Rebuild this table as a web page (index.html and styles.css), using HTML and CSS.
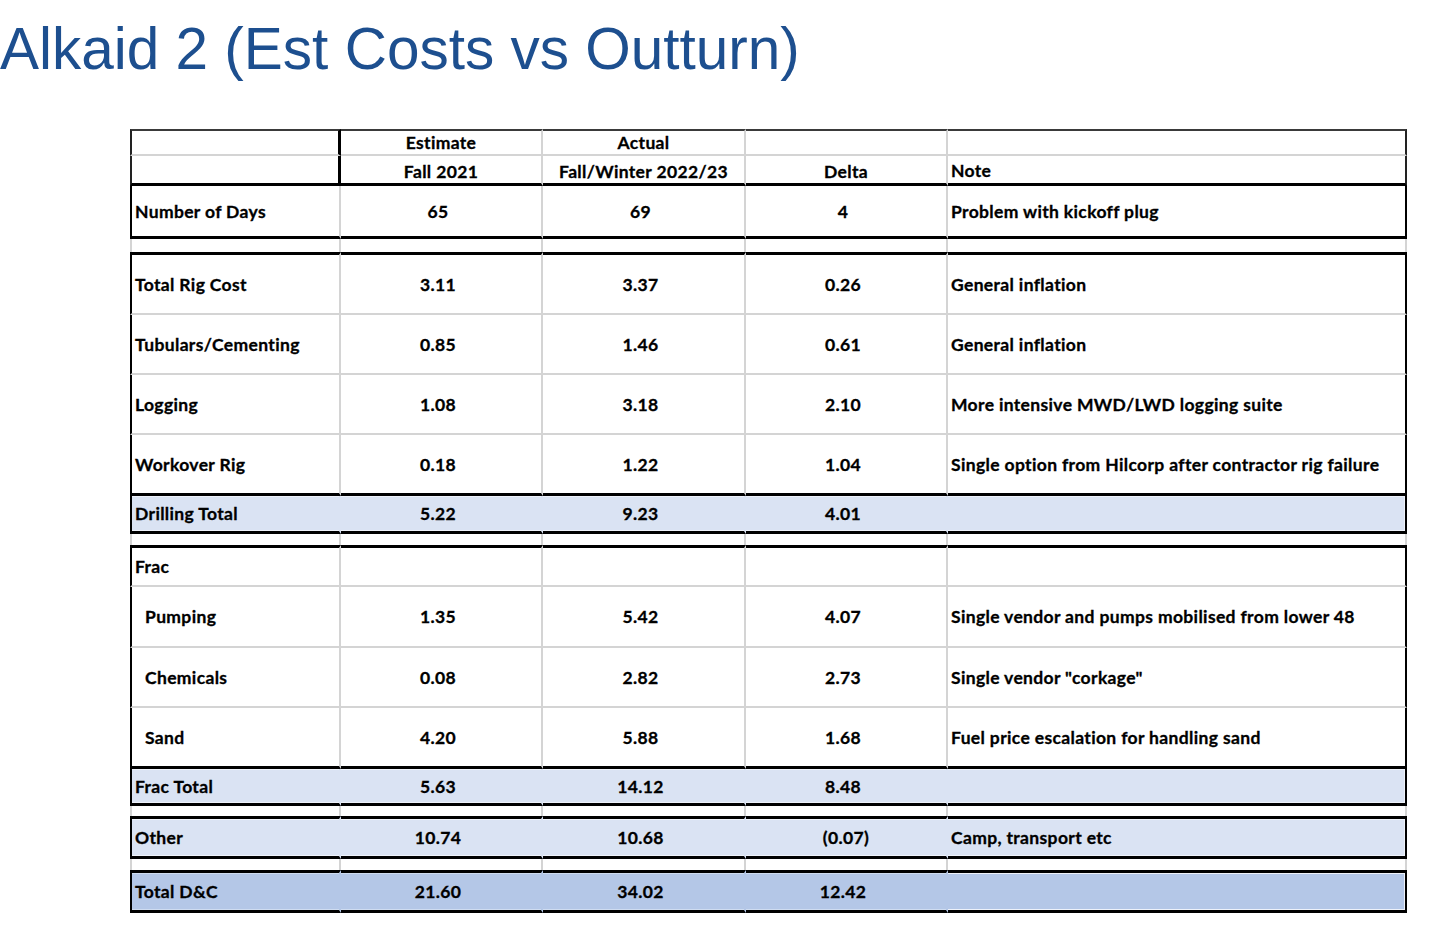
FILE: index.html
```html
<!DOCTYPE html>
<html lang="en">
<head>
<meta charset="utf-8">
<title>Alkaid 2 (Est Costs vs Outturn)</title>
<link rel="stylesheet" href="styles.css">
</head>
<body>
<h1 class="title">Alkaid 2 (Est Costs vs Outturn)</h1>
<div class="sheet">
  <div class="row head1">
    <div class="c lab"></div><div class="c hd">Estimate</div><div class="c hd">Actual</div><div class="c hd"></div><div class="c note"></div>
  </div>
  <div class="row head2">
    <div class="c lab"></div><div class="c hd">Fall 2021</div><div class="c hd">Fall/Winter 2022/23</div><div class="c hd">Delta</div><div class="c note">Note</div>
  </div>
  <div class="row blk bb h53">
    <div class="c lab">Number of Days</div><div class="c num">65</div><div class="c num">69</div><div class="c num">4</div><div class="c note">Problem with kickoff plug</div>
  </div>
  <div class="row gap h13">
    <div class="c"></div><div class="c"></div><div class="c"></div><div class="c"></div><div class="c"></div>
  </div>
  <div class="row blk bt bg h63">
    <div class="c lab">Total Rig Cost</div><div class="c num">3.11</div><div class="c num">3.37</div><div class="c num">0.26</div><div class="c note">General inflation</div>
  </div>
  <div class="row blk bg h60">
    <div class="c lab">Tubulars/Cementing</div><div class="c num">0.85</div><div class="c num">1.46</div><div class="c num">0.61</div><div class="c note">General inflation</div>
  </div>
  <div class="row blk bg h60">
    <div class="c lab">Logging</div><div class="c num">1.08</div><div class="c num">3.18</div><div class="c num">2.10</div><div class="c note">More intensive MWD/LWD logging suite</div>
  </div>
  <div class="row blk bb h61">
    <div class="c lab">Workover Rig</div><div class="c num">0.18</div><div class="c num">1.22</div><div class="c num">1.04</div><div class="c note">Single option from Hilcorp after contractor rig failure</div>
  </div>
  <div class="row blk fill bb h38">
    <div class="c lab">Drilling Total</div><div class="c num">5.22</div><div class="c num">9.23</div><div class="c num">4.01</div><div class="c note"></div>
  </div>
  <div class="row gap h11">
    <div class="c"></div><div class="c"></div><div class="c"></div><div class="c"></div><div class="c"></div>
  </div>
  <div class="row blk bt bg h42">
    <div class="c lab">Frac</div><div class="c num"></div><div class="c num"></div><div class="c num"></div><div class="c note"></div>
  </div>
  <div class="row blk bg h61">
    <div class="c lab sub">Pumping</div><div class="c num">1.35</div><div class="c num">5.42</div><div class="c num">4.07</div><div class="c note">Single vendor and pumps mobilised from lower 48</div>
  </div>
  <div class="row blk bg h60">
    <div class="c lab sub">Chemicals</div><div class="c num">0.08</div><div class="c num">2.82</div><div class="c num">2.73</div><div class="c note">Single vendor "corkage"</div>
  </div>
  <div class="row blk bb h61">
    <div class="c lab sub">Sand</div><div class="c num">4.20</div><div class="c num">5.88</div><div class="c num">1.68</div><div class="c note">Fuel price escalation for handling sand</div>
  </div>
  <div class="row blk fill bb h37">
    <div class="c lab">Frac Total</div><div class="c num">5.63</div><div class="c num">14.12</div><div class="c num">8.48</div><div class="c note"></div>
  </div>
  <div class="row gap h10">
    <div class="c"></div><div class="c"></div><div class="c"></div><div class="c"></div><div class="c"></div>
  </div>
  <div class="row blk fill bt bb h43">
    <div class="c lab">Other</div><div class="c num">10.74</div><div class="c num">10.68</div><div class="c num neg">(0.07)</div><div class="c note">Camp, transport etc</div>
  </div>
  <div class="row gap h11">
    <div class="c"></div><div class="c"></div><div class="c"></div><div class="c"></div><div class="c"></div>
  </div>
  <div class="row blk fill dark bt bb h43">
    <div class="c lab">Total D&amp;C</div><div class="c num">21.60</div><div class="c num">34.02</div><div class="c num">12.42</div><div class="c note"></div>
  </div>
</div>
</body>
</html>
```

FILE: styles.css
```css
html, body {
  margin: 0;
  padding: 0;
  background: #ffffff;
}

.title {
  margin: 0;
  padding: 20px 0 0 0;
  height: 58px;
  font-family: "Liberation Sans", Arial, sans-serif;
  font-weight: 400;
  font-size: 58.5px;
  line-height: 58.5px;
  color: #1d4f8f;
  white-space: nowrap;
}

.sheet {
  margin: 51px 0 0 130px;
  width: 1277px;
  font-family: Lato, "Open Sans", sans-serif;
  font-weight: 700;
  font-size: 17.5px;
  letter-spacing: 0.35px;
  -webkit-text-stroke: 0.3px #000;
  color: #000;
}

.row {
  display: grid;
  grid-template-columns: 211px 202px 203px 202px 459px;
}

.c {
  box-sizing: border-box;
  display: flex;
  align-items: center;
  border-right: 2px solid #d4d4d4;
  white-space: nowrap;
  min-width: 0;
}

.c:first-child {
  border-left: 2px solid #d4d4d4;
}

.lab {
  padding-left: 3px;
}

.lab.sub {
  padding-left: 13px;
}

.hd {
  justify-content: center;
}

.num {
  justify-content: center;
  padding-right: 6px;
}

.num.neg {
  padding-right: 0;
}

.note {
  padding-left: 3px;
}

/* header */
.head1 {
  height: 27px;
}

.head1 .c {
  border-top: 2px solid #3a3a3a;
  border-bottom: 2px solid #d4d4d4;
}

.head2 {
  height: 30px;
}

.head2 .c {
  border-bottom: 3px solid #000;
  padding-top: 3px;
}

.head2 .note {
  padding-top: 1px;
}

.head1 .c:first-child,
.head2 .c:first-child {
  border-left-color: #222;
}

.head1 .c:last-child,
.head2 .c:last-child {
  border-right-color: #222;
}

.head1 .lab,
.head2 .lab {
  border-right: 3px solid #000;
}

/* blocks */
.blk .c:first-child {
  border-left-color: #000;
}

.blk .c:last-child {
  border-right-color: #000;
}

.bt .c {
  border-top: 3px solid #000;
}

.bb .c {
  border-bottom: 3px solid #000;
}

.bg .c {
  border-bottom: 2px solid #d4d4d4;
}

.fill .c {
  background: #dae3f3;
  border-right-color: #dae3f3;
  box-shadow: inset 0 1px 0 #eef2fa, inset 0 -1px 0 #eef2fa;
}

.fill.dark .c {
  background: #b4c7e7;
  border-right-color: #b4c7e7;
  box-shadow: inset 0 1px 0 #cfdcf0, inset 0 -1px 0 #cfdcf0;
}

.fill .c:last-child,
.fill.dark .c:last-child {
  border-right-color: #000;
  box-shadow: inset 0 1px 0 #eef2fa, inset 0 -1px 0 #eef2fa, inset -1px 0 0 #eef2fa;
}

/* heights */
.h10 { height: 10px; }
.h11 { height: 11px; }
.h13 { height: 13px; }
.h37 { height: 37px; }
.h38 { height: 38px; }
.h42 { height: 42px; }
.h43 { height: 43px; }
.h53 { height: 53px; }
.h60 { height: 60px; }
.h61 { height: 61px; }
.h63 { height: 63px; }
```
